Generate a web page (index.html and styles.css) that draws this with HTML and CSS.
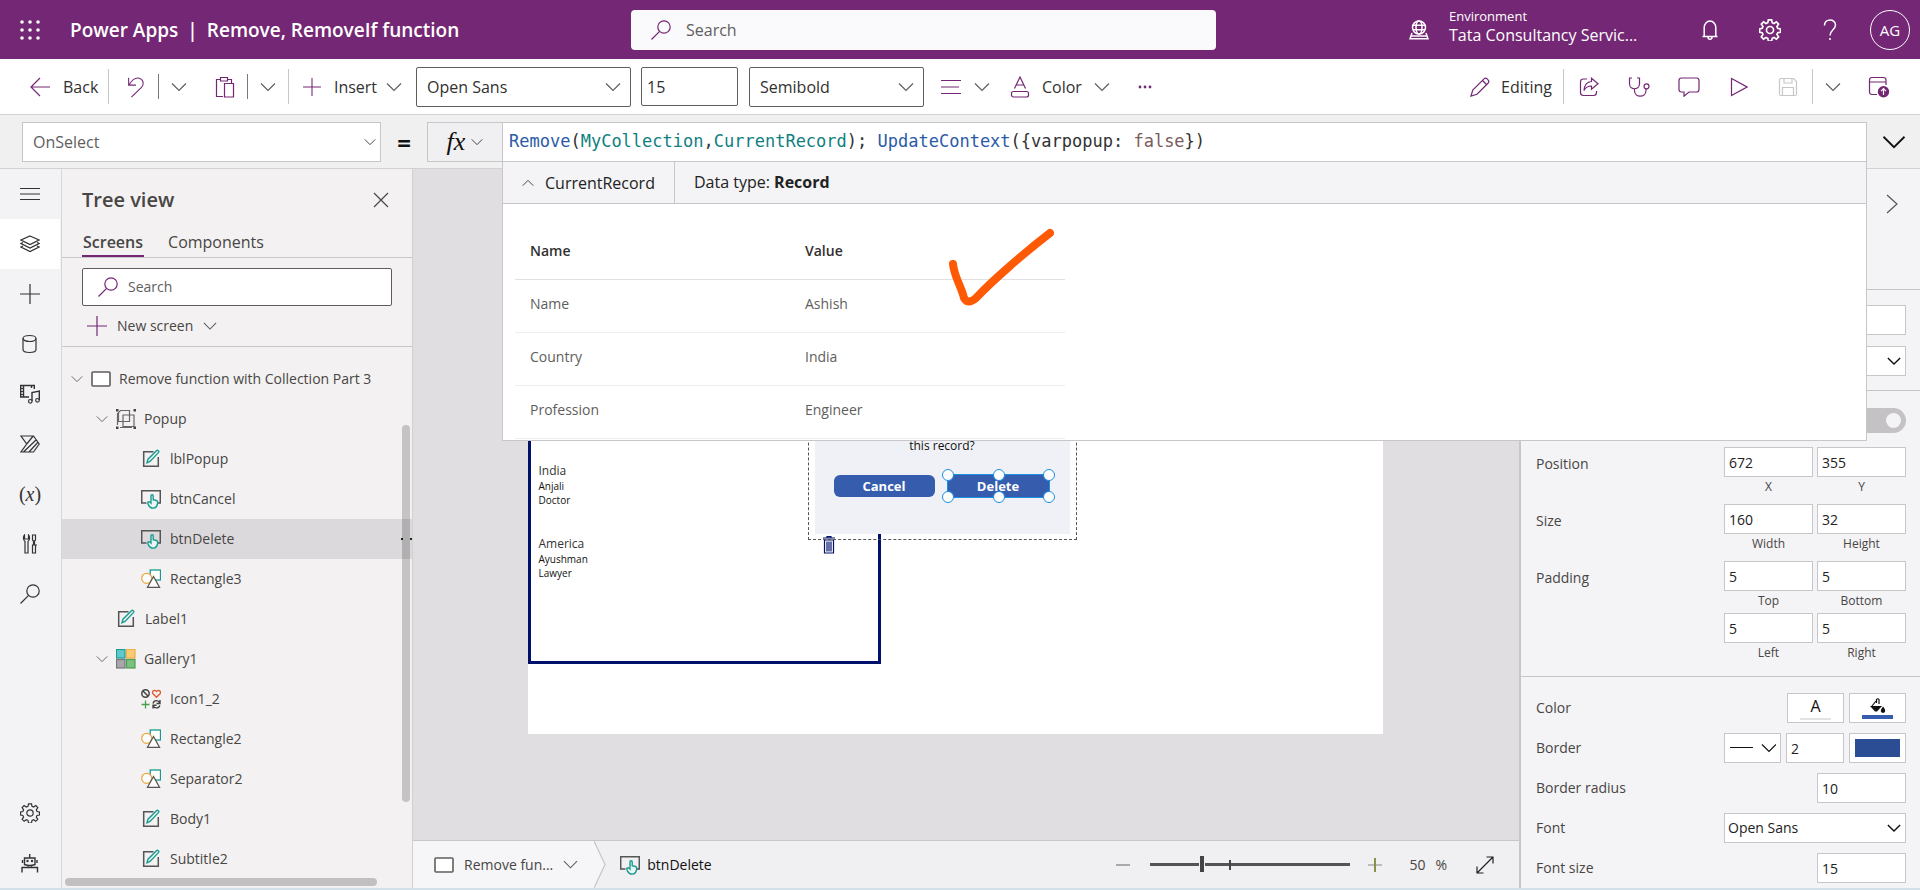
FILE: index.html
```html
<!DOCTYPE html>
<html lang="en">
<head>
<meta charset="utf-8">
<title>Power Apps | Remove, RemoveIf function</title>
<link rel="stylesheet" href="styles.css">
</head>
<body>
<svg class="sprite" aria-hidden="true">
  <symbol id="chev" viewBox="0 0 16 16"><path d="M1 4.500l7 7 7-7"/></symbol>
  <symbol id="plus" viewBox="0 0 20 20"><path d="M10 0v20M0 10h20"/></symbol>
  <symbol id="search" viewBox="0 0 20 20"><circle cx="13" cy="7" r="6.200"/><path d="M8.600 11.400L.5 19.500"/></symbol>
  <symbol id="close" viewBox="0 0 16 16"><path d="M1 1l14 14M15 1L1 15"/></symbol>
  <symbol id="gear" viewBox="0 0 20 20"><circle cx="10" cy="10" r="3.200"/><path d="M8.500 .8h3l.5 2.600 1.600.7 2.200-1.500 2 2-1.500 2.200.7 1.700 2.500.5v3l-2.500.5-.7 1.600 1.500 2.200-2 2-2.200-1.500-1.600.7-.5 2.500h-3L8 17.500l-1.700-.7-2.200 1.500-2-2 1.500-2.200-.7-1.600L.6 12V9l2.300-.5.7-1.700-1.500-2.200 2-2 2.200 1.500L8 3.400z"/></symbol>
  <symbol id="screen" viewBox="0 0 20 16"><rect x="1" y="1" width="18" height="14" rx="1" fill="#fff"/></symbol>
  <symbol id="label" viewBox="0 0 20 20"><path d="M12.500 2.700H2.700v14.600h14.600V8" stroke="#555" stroke-width="1.500"/><path d="M6 13.800l1-3.600L15.700 1.500c.9-.8 2.700.9 1.900 1.900L9 12.500z" stroke="#199b90" stroke-width="1.400"/></symbol>
  <symbol id="button" viewBox="0 0 20 20"><path d="M5.500 14H.7V1.700h18.600V14H17" stroke="#555" stroke-width="1.500"/><path d="M10 13V6.800c0-1.400 2.200-1.400 2.200 0v4l3.200.7c1 .3 1.400.9 1.300 1.900-.2 3.400-1.600 5.700-4.600 5.700-2.400 0-3.600-1-4.400-2.700-.5-1.200-1.500-2.500-.7-3.300.8-.7 1.700-.3 3 1z" fill="#e8f7f5" stroke="#199b90" stroke-width="1.400"/></symbol>
  <symbol id="shapes" viewBox="0 0 20 20"><rect x="9.200" y="1" width="10.300" height="10" fill="#fff" stroke="#199b90" stroke-width="1.300"/><circle cx="5.700" cy="9.300" r="5" fill="#fff" stroke="#eda73c" stroke-width="1.200"/><path d="M12.500 7.500l6 10.800h-12z" fill="#fff" stroke="#555" stroke-width="1.300"/></symbol>
</svg>

<header class="top">
  <button class="icon-btn waffle" aria-label="App launcher"><svg width="20" height="20" viewBox="0 0 20 20"><g class="solid"><circle cx="2" cy="2" r="1.800"/><circle cx="10" cy="2" r="1.800"/><circle cx="18" cy="2" r="1.800"/><circle cx="2" cy="10" r="1.800"/><circle cx="10" cy="10" r="1.800"/><circle cx="18" cy="10" r="1.800"/><circle cx="2" cy="18" r="1.800"/><circle cx="10" cy="18" r="1.800"/><circle cx="18" cy="18" r="1.800"/></g></svg></button>
  <h1 class="brand"><span>Power Apps</span><span>|</span><span>Remove, RemoveIf function</span></h1>
  <label class="top-search"><svg width="20" height="20"><use href="#search"/></svg><input type="text" placeholder="Search" aria-label="Search"></label>
  <div class="top-right">
    <div class="env">
      <svg width="20" height="20" viewBox="0 0 20 20"><circle cx="10" cy="7.500" r="6.500"/><ellipse cx="10" cy="7.500" rx="3" ry="6.500"/><path d="M4 5.300h12M4 9.700h12M3 13L1 18.800h18L17 13M2 16h16"/></svg>
      <p class="env-text"><span class="env-label">Environment</span><span>Tata Consultancy Servic...</span></p>
    </div>
    <button class="icon-btn" aria-label="Notifications"><svg width="20" height="22" viewBox="0 0 20 22"><path d="M2.500 17.500h15M4.200 17.500V8.500a5.800 6.500 0 0 1 11.600 0v9M8 18c0 3 4 3 4 0"/></svg></button>
    <button class="icon-btn" aria-label="Settings"><svg width="22" height="22"><use href="#gear"/></svg></button>
    <button class="icon-btn" aria-label="Help"><svg width="14" height="22" viewBox="0 0 14 22"><path d="M1.500 6.500C1.500-.8 12.500-.5 12.500 6c0 4.500-5.500 5-5.500 10.500M7 19v2"/></svg></button>
    <button class="avatar">AG</button>
  </div>
</header>

<nav class="toolbar">
  <div class="tools">
    <button class="tool back"><svg width="20" height="20" viewBox="0 0 20 20"><path d="M20 10H1M10 1L1 10l9 9"/></svg>Back</button>
    <i class="sep tall"></i>
    <button class="tool undo" aria-label="Undo"><svg width="18" height="22" viewBox="0 0 18 24"><path d="M1 2v8h8M1.500 9.500C5 4 9 1.500 12.500 2.500c5 1.500 5.500 7 2.500 10L4 23"/></svg></button>
    <i class="sep"></i>
    <button class="tool drop" aria-label="Undo options"><svg class="grey" width="16" height="16"><use href="#chev"/></svg></button>
    <button class="tool paste" aria-label="Paste"><svg width="20" height="22" viewBox="0 0 20 22"><path d="M8 20.500H1.500v-17H5M13 3.500h3.500V7M5.500 1.500h7v3.500h-7zM9.500 7.500h9v13.500h-9z"/></svg></button>
    <i class="sep"></i>
    <button class="tool drop" aria-label="Paste options"><svg class="grey" width="16" height="16"><use href="#chev"/></svg></button>
    <i class="sep tall"></i>
    <button class="tool insert"><svg width="18" height="18"><use href="#plus"/></svg>Insert<svg class="grey" width="16" height="16"><use href="#chev"/></svg></button>
    <div class="pick font-pick"><select aria-label="Font"><option>Open Sans</option></select><svg class="grey" width="16" height="16"><use href="#chev"/></svg></div>
    <input class="size-box" type="text" value="15" aria-label="Font size">
    <div class="pick weight-pick"><select aria-label="Font weight"><option>Semibold</option></select><svg class="grey" width="16" height="16"><use href="#chev"/></svg></div>
    <button class="tool align" aria-label="Align"><svg width="20" height="16" viewBox="0 0 20 16"><path d="M0 1.500h20M0 8h18M0 14.500h20"/></svg><svg class="grey" width="16" height="16"><use href="#chev"/></svg></button>
    <button class="tool color"><svg width="20" height="22" viewBox="0 0 20 22"><path d="M4.500 12.500L10 1l5.500 11.500M6.500 9h7"/><rect x="1.500" y="15.500" width="17" height="5.500" rx="2"/></svg>Color<svg class="grey" width="16" height="16"><use href="#chev"/></svg></button>
    <button class="tool more" aria-label="More"><svg width="14" height="4" viewBox="0 0 14 4"><g class="solid"><circle cx="2" cy="2" r="1.400"/><circle cx="7" cy="2" r="1.400"/><circle cx="12" cy="2" r="1.400"/></g></svg></button>
  </div>
  <div class="tools">
    <button class="tool edit"><svg width="20" height="20" viewBox="0 0 20 20"><path d="M1 19l1.800-6L14 1.800c2-2 6.200 2 4.200 4.200L7 17.200zM12.500 3.500l4 4"/></svg>Editing</button>
    <i class="sep tall"></i>
    <button class="tool act" aria-label="Share"><svg width="20" height="20" viewBox="0 0 20 20"><path d="M8 2H4.500Q1.500 2 1.500 5v10.500q0 3 3 3h10q3 0 3-3V14M12.500 1.200l6.500 5.600-6.500 5.500V9C8.500 9 6.500 10.500 5 13.500 5.500 8 8.500 4.700 12.500 4.500z"/></svg></button>
    <button class="tool act" aria-label="App checker"><svg width="22" height="20" viewBox="0 0 22 20"><path d="M4 1H1.500v5.500c0 7 10 7 10 0V1H9M6.500 12v1.500c0 7.500 11.500 7.500 11.500 0V12"/><circle cx="18.500" cy="9.300" r="2.500"/></svg></button>
    <button class="tool act" aria-label="Comments"><svg width="22" height="20" viewBox="0 0 22 20"><path d="M3.500 1h15q2.500 0 2.500 2.500v9q0 2.500-2.500 2.500H11l-5 4.200V15H3.500Q1 15 1 12.500v-9Q1 1 3.500 1z"/></svg></button>
    <button class="tool act" aria-label="Preview"><svg width="18" height="20" viewBox="0 0 18 20"><path d="M1.500 1.500v17L17 10z"/></svg></button>
    <button class="tool act off" aria-label="Save" disabled><svg width="20" height="20" viewBox="0 0 20 20"><path d="M3 1.500h12.500l3 3V17q0 1.500-1.500 1.500H3q-1.500 0-1.500-1.500V3Q1.500 1.500 3 1.500zM6 1.500V6h8V1.500M4.500 18.500V10.500h11v8"/></svg></button>
    <i class="sep tall"></i>
    <button class="tool save-drop" aria-label="Save options"><svg class="grey" width="16" height="16"><use href="#chev"/></svg></button>
    <button class="tool publish" aria-label="Publish"><svg width="22" height="22" viewBox="0 0 22 22"><path d="M9 18.500H4Q1.500 18.500 1.500 16V4Q1.500 1.500 4 1.500h11.500Q18 1.500 18 4v5M1.500 6H18"/><circle class="solid" cx="15.500" cy="15.800" r="5.700"/><path d="M15.500 19v-6M13 15.200l2.500-2.500 2.500 2.500" stroke="#fff"/></svg></button>
  </div>
</nav>

<section class="formula">
  <div class="pick prop-pick"><select aria-label="Property"><option>OnSelect</option></select><svg class="dark" width="12" height="12"><use href="#chev"/></svg></div>
  <span class="equals">=</span>
  <button class="fx"><i>fx</i><svg class="dark" width="12" height="12"><use href="#chev"/></svg></button>
  <div class="formula-field">
    <code class="code"><span class="fn">Remove</span>(<span class="id">MyCollection</span>,<span class="id">CurrentRecord</span>); <span class="fn">UpdateContext</span>({varpopup: <span class="lit">false</span>})</code>
    <div class="result">
      <div class="result-head">
        <button class="result-name"><svg class="dark flip" width="12" height="12"><use href="#chev"/></svg>CurrentRecord</button>
        <p>Data type: <b>Record</b></p>
      </div>
      <div class="result-body">
        <table>
          <thead><tr><th>Name</th><th>Value</th></tr></thead>
          <tbody>
            <tr><td>Name</td><td>Ashish</td></tr>
            <tr><td>Country</td><td>India</td></tr>
            <tr><td>Profession</td><td>Engineer</td></tr>
          </tbody>
        </table>
      </div>
      <svg class="tick" width="110" height="80" viewBox="0 0 110 80"><path d="M9 36C10 48 17 58 20 70q4 7 12 0C48 53 80 25 106 5"/></svg>
    </div>
  </div>
  <button class="expand" aria-label="Expand formula bar"><svg width="24" height="24"><use href="#chev"/></svg></button>
</section>

<main class="work">
  <nav class="rail">
    <button aria-label="Menu"><svg width="20" height="20" viewBox="0 0 20 20"><path d="M0 4.500h20M0 10h20M0 15.500h20"/></svg></button>
    <button class="on" aria-label="Tree view"><svg width="20" height="20" viewBox="0 0 20 20"><path d="M10 2l9 4-9 4.500L1 6zM3 8.500L1 9.500 10 14l9-4.500-2-1M3 12l-2 1 9 4.500 9-4.500-2-1"/></svg></button>
    <button aria-label="Insert"><svg width="20" height="20"><use href="#plus"/></svg></button>
    <button aria-label="Data"><svg width="20" height="20" viewBox="0 0 20 20"><ellipse cx="9.500" cy="4.500" rx="6.500" ry="3"/><path d="M3 4.500v11c0 4 13 4 13 0v-11"/></svg></button>
    <button aria-label="Media"><svg width="20" height="20" viewBox="0 0 20 20"><path d="M9 13H.7V1.500h13.600V5M3.500 1.500v11.500M11.500 1.500V4M12 17V8.500l7.300-1.500v9" stroke-width="1.400"/><path d="M.7 4.500h2.800M.7 7.500h2.800M.7 10.500h2.800"/><circle cx="10.300" cy="17.300" r="1.800"/><circle cx="17.500" cy="16.300" r="1.800"/></svg></button>
    <button aria-label="Power Automate"><svg width="20" height="20" viewBox="0 0 20 20"><path d="M1 2h12.500l5.700 8-5.700 8H1l5.700-8zM6.700 10l6.500-8M3.500 18L16.500 5.500M9 18l8.700-9.500"/></svg></button>
    <button class="var" aria-label="Variables">(<i>x</i>)</button>
    <button aria-label="Advanced tools"><svg width="20" height="20" viewBox="0 0 20 20"><path d="M4.500 1C3 2.500 3 6 5 7.500V19h3V7.500C10 6 10 2.500 8.500 1v4h-4zM12.500 1h3v5l-1 1v4l-1-.0V7l-1-1zM12 11h5M12.500 11v8h3v-8"/></svg></button>
    <button aria-label="Search"><svg width="20" height="20"><use href="#search"/></svg></button>
    <button class="push" aria-label="Settings"><svg width="20" height="20"><use href="#gear"/></svg></button>
    <button aria-label="Virtual agent"><svg width="20" height="20" viewBox="0 0 20 20"><path d="M2 19.500v-5h15.500v5M4.500 5h10.500v6.500q-5.200 2-10.500 0zM9.700 1v4M2.500 7v3M17 7v3M8 12.500v2M11.500 12.500v2" stroke-width="1.400"/><g class="solid"><circle cx="7.500" cy="8" r="1.200"/><circle cx="12" cy="8" r="1.200"/></g></svg></button>
  </nav>

  <aside class="tree">
    <div class="tree-head"><h2>Tree view</h2><button class="icon-btn" aria-label="Close"><svg width="16" height="16"><use href="#close"/></svg></button></div>
    <div class="tabs"><button class="tab on">Screens</button><button class="tab">Components</button></div>
    <div class="tree-tools">
      <label class="tree-search"><svg width="20" height="20"><use href="#search"/></svg><input type="text" placeholder="Search" aria-label="Search tree"></label>
      <button class="new-screen"><svg width="20" height="20"><use href="#plus"/></svg>New screen<svg class="grey" width="14" height="14"><use href="#chev"/></svg></button>
    </div>
    <div class="nodes-wrap">
      <ul class="nodes">
        <li class="l0"><svg class="grey" width="12" height="12"><use href="#chev"/></svg><svg class="frame" width="20" height="16"><use href="#screen"/></svg>Remove function with Collection Part 3</li>
        <li class="l1"><svg class="grey" width="12" height="12"><use href="#chev"/></svg><svg width="20" height="20" viewBox="0 0 20 20"><path d="M4.500 1.500h9v11h-11v-9zM7 6h11v11.500H7zM1.500 4v12M4 18.500h12M18.500 4" stroke="#666"/><path d="M0 0h2.500v2.500H0zM17.500 0H20v2.500h-2.500zM0 17.500h2.500V20H0zM17.500 17.500H20V20h-2.500z" fill="#444" stroke="none"/></svg>Popup</li>
        <li class="l2"><svg width="20" height="20"><use href="#label"/></svg>lblPopup</li>
        <li class="l2"><svg width="20" height="20"><use href="#button"/></svg>btnCancel</li>
        <li class="l2 on"><svg width="20" height="20"><use href="#button"/></svg>btnDelete<span class="dots"><i></i><i></i></span></li>
        <li class="l2"><svg width="20" height="20"><use href="#shapes"/></svg>Rectangle3</li>
        <li class="l1b"><svg width="20" height="20"><use href="#label"/></svg>Label1</li>
        <li class="l1"><svg class="grey" width="12" height="12"><use href="#chev"/></svg><svg width="20" height="20" viewBox="0 0 20 20"><rect x=".5" y=".5" width="8.500" height="8.500" fill="#5fcaca" stroke="#1f9a97"/><rect x="10.500" y=".5" width="8.500" height="8.500" fill="#fbcb74" stroke="#eeb04c"/><rect x=".5" y="10.500" width="8.500" height="8.500" fill="#aaa7ac" stroke="#777"/><rect x="10.500" y="10.500" width="8.500" height="8.500" fill="#7dc17f" stroke="#4e9e55"/></svg>Gallery1</li>
        <li class="l2"><svg width="20" height="20" viewBox="0 0 20 20"><circle cx="4.500" cy="4.500" r="3.700" stroke="#444" stroke-width="1.500"/><path d="M2 2l5 5" stroke="#444" stroke-width="1.500"/><path d="M15.500 8.300L12 4.800c-1.800-2 1.500-5 3.500-2.300 2-2.700 5.300.3 3.500 2.300z" stroke="#e2572f" stroke-width="1.300"/><path d="M4.500 11.500v8M.5 15.500h8" stroke="#47a14b" stroke-width="1.300"/><path d="M19 11v3.500h-3.500M18.800 14c-1.500-3.500-6-3-6.800.5M12 19.500V16.300h3.500M12 16.800c1.500 3 6 2.800 6.800-.5" stroke="#444" stroke-width="1.400"/></svg>Icon1_2</li>
        <li class="l2"><svg width="20" height="20"><use href="#shapes"/></svg>Rectangle2</li>
        <li class="l2"><svg width="20" height="20"><use href="#shapes"/></svg>Separator2</li>
        <li class="l2"><svg width="20" height="20"><use href="#label"/></svg>Body1</li>
        <li class="l2"><svg width="20" height="20"><use href="#label"/></svg>Subtitle2</li>
      </ul>
      <i class="vbar"></i>
    </div>
    <i class="hbar"></i>
  </aside>

  <section class="center">
    <div class="canvas">
      <div class="stage">
        <div class="gallery">
          <div class="item item-a"><p>India</p><p>Anjali</p><p>Doctor</p></div>
          <div class="item item-b"><p>America</p><p>Ayushman</p><p>Lawyer</p></div>
          <svg class="trash" width="12" height="18" viewBox="0 0 12 18"><path d="M0 2h12M4 2V.7h4V2M1.500 4h9v13h-9zM4 5.500v10M6 5.500v10M8 5.500v10"/></svg>
        </div>
        <div class="popup-group">
          <div class="popup">
            <p>this record?</p>
            <div class="popup-btns">
              <button class="pbtn">Cancel</button>
              <button class="pbtn sel">Delete<i class="h tl"></i><i class="h tc"></i><i class="h tr"></i><i class="h bl"></i><i class="h bc"></i><i class="h br"></i></button>
            </div>
          </div>
        </div>
      </div>
    </div>
    <footer class="status">
      <button class="crumb"><svg class="frame" width="20" height="16"><use href="#screen"/></svg>Remove fun...<svg class="grey" width="15" height="15"><use href="#chev"/></svg></button>
      <svg class="crumb-arrow" width="12" height="47" viewBox="0 0 12 47"><path d="M0 0l11 23.500L0 47"/></svg>
      <button class="crumb last"><svg width="20" height="20"><use href="#button"/></svg>btnDelete</button>
      <div class="zoom">
        <button aria-label="Zoom out"><svg width="14" height="14" viewBox="0 0 14 14"><path d="M0 7h14" stroke="#aaa" stroke-width="2"/></svg></button>
        <div class="slider"><input type="range" min="0" max="100" value="25" aria-label="Zoom"><i></i></div>
        <button aria-label="Zoom in"><svg width="14" height="14" viewBox="0 0 14 14"><path d="M0 7h14" stroke="#999"/><path d="M7 0v14" stroke="#8a8f4a" stroke-width="2"/></svg></button>
        <span class="pct"><span>50</span><span>%</span></span>
        <button class="fit" aria-label="Fit to window"><svg width="18" height="18" viewBox="0 0 18 18"><path d="M1 17L17 1M10.500 1H17v6.500M1 10.500V17h6.500"/></svg></button>
      </div>
    </footer>
  </section>

  <aside class="props">
    <div class="props-top"><button class="icon-btn" aria-label="Collapse panel"><svg width="12" height="20" viewBox="0 0 12 20"><path d="M1 1l10 9-10 9" stroke="#555"/></svg></button></div>
    <div class="group g-a">
      <input type="text" aria-label="Text">
      <div class="pick"><select aria-label="Display mode"><option></option></select><svg class="ink" width="14" height="14"><use href="#chev"/></svg></div>
    </div>
    <div class="group g-b">
      <div class="row"><input class="switch" type="checkbox" checked aria-label="Visible"></div>
      <div class="row"><span>Position</span>
        <label class="cell"><input type="text" value="672">X</label><label class="cell"><input type="text" value="355">Y</label></div>
      <div class="row"><span>Size</span>
        <label class="cell"><input type="text" value="160">Width</label><label class="cell"><input type="text" value="32">Height</label></div>
      <div class="row pad"><span>Padding</span>
        <label class="cell"><input type="text" value="5">Top</label><label class="cell"><input type="text" value="5">Bottom</label></div>
      <div class="row"><span></span>
        <label class="cell"><input type="text" value="5">Left</label><label class="cell"><input type="text" value="5">Right</label></div>
    </div>
    <div class="group g-c">
      <div class="line"><span>Color</span><button class="swatch" aria-label="Text color"><b>A</b><i></i></button><button class="swatch" aria-label="Fill color"><svg width="16" height="15" viewBox="0 0 16 15"><path d="M6.500 5V1.500Q8 0 9 1.500V6M6 3L2 8" stroke="#111"/><path d="M0 8h12L7 13.500H5z" fill="#111" stroke="none"/><path d="M13 9.500q2.500 3 1 4.500-1.500.8-2.500-.5-.5-1.500 1.500-4z" fill="#111"/></svg><i class="blue"></i></button></div>
      <div class="line"><label for="bw">Border</label><button class="swatch style" aria-label="Border style"><svg width="46" height="14" viewBox="0 0 46 14"><path d="M0 6.500h23M32 3.500l7 7 7-7"/></svg></button><input id="bw" class="mid" type="text" value="2"><button class="swatch" aria-label="Border color"><em></em></button></div>
      <div class="line"><label for="br">Border radius</label><input id="br" type="text" value="10"></div>
      <div class="line"><label for="ff">Font</label><div class="pick"><select id="ff"><option>Open Sans</option></select><svg class="ink" width="14" height="14"><use href="#chev"/></svg></div></div>
      <div class="line"><label for="fs">Font size</label><input id="fs" type="text" value="15"></div>
    </div>
  </aside>
</main>
<div class="strip"></div>
</body>
</html>
```

FILE: styles.css
```css
* { box-sizing: border-box; }
body {
  margin: 0; height: 100vh; display: flex; flex-direction: column; overflow: hidden;
  font: 14px/20px "Open Sans", "Noto Sans", sans-serif; color: #484644; background: #f3f2f4;
}
.sprite { position: absolute; width: 0; height: 0; }
h1, h2, p, ul { margin: 0; padding: 0; }
button, input, select { font: inherit; color: inherit; }
button { background: none; border: 0; padding: 0; display: flex; align-items: center; justify-content: center; }
input, select { border: 1px solid #c8c6c9; background: #fff; min-width: 0; border-radius: 0; }
input::placeholder { color: #605e5c; opacity: 1; }
svg { fill: none; stroke: currentColor; stroke-width: 1.2; flex: none; display: block; }
.solid { fill: currentColor; stroke: none; }
.grey { color: #605e5c; }
.dark { color: #333; }
.ink { color: #111; stroke-width: 1.6; }

.top { flex: 0 0 59px; background: #742774; color: #fff; display: flex; align-items: center; padding: 0 10px 0 20px; }
.waffle { width: 20px; }
.brand { flex: 0 0 561px; margin-left: 30px; display: flex; gap: 9px; font-size: 19px; font-weight: 600; white-space: nowrap; }
.top-search { flex: 0 1 585px; height: 40px; display: flex; align-items: center; gap: 15px; padding: 0 20px; background: #faf9fb; border-radius: 4px; color: #742774; }
.top-search input { flex: 1; border: 0; background: none; padding: 0; font-size: 16px; }
.top-right { flex: 1; display: flex; align-items: center; justify-content: flex-end; gap: 20px; }
.top-right .icon-btn { width: 40px; height: 40px; }
.top-right svg { stroke-width: 1.5; }
.env { display: flex; align-items: center; gap: 20px; margin-right: 29px; }
.env-text { display: flex; flex-direction: column; width: 192px; padding-bottom: 8px; font-size: 16px; white-space: nowrap; }
.env-label { font-size: 13px; line-height: 18px; }
.avatar { width: 40px; height: 40px; border: 1px solid #fff; border-radius: 50%; font-size: 15px; }

.toolbar { flex: 0 0 56px; background: #fff; border-bottom: 1px solid #d2d0d3; display: flex; justify-content: space-between; padding: 0 30px; font-size: 16px; }
.tools { display: flex; align-items: center; color: #742774; }
.tool { height: 40px; gap: 10px; color: #323130; }
.tool svg { color: #742774; }
.tool svg.grey { color: #605e5c; }
.sep { width: 1px; height: 25px; background: #797779; }
.sep.tall { height: 35px; background: #c8c6c9; }
.back { width: 78px; gap: 13px; justify-content: flex-start; }
.undo { width: 49px; padding-left: 5px; }
.drop { width: 40px; }
.undo + .sep + .drop { margin-right: 3px; }
.paste { width: 45px; }
.insert { width: 127px; gap: 13px; }
.pick { display: grid; align-items: center; }
.pick > * { grid-area: 1 / 1; }
.pick select { appearance: none; width: 100%; height: 100%; padding: 0 10px; }
.pick svg { justify-self: end; margin-right: 10px; pointer-events: none; }
.tools .pick select, .size-box { border-color: #605e5c; border-radius: 2px; color: #323130; }
.font-pick { width: 215px; height: 40px; }
.size-box { width: 97px; height: 39px; margin: 0 11px 0 10px; padding: 0 5px; }
.weight-pick { width: 175px; height: 40px; }
.align { margin-left: 17px; gap: 13px; }
.color { margin-left: 20px; gap: 12px; }
.insert svg.grey { margin-left: -4px; }
.more { margin-left: 28px; }
.edit { margin-right: 11px; gap: 11px; }
.act { width: 50px; }
.act.off { width: 48px; }
.off svg { color: #c8c6c9; }
.save-drop { width: 40px; }
.publish { margin-left: 15px; }

.formula { flex: 0 0 54px; position: relative; z-index: 5; display: flex; align-items: flex-start; padding: 7px 0 0 22px; background: #f0f0f1; border-bottom: 1px solid #d2d0d3; }
.prop-pick { width: 359px; height: 40px; font-size: 16px; }
.prop-pick select { color: #605e5c; }
.prop-pick svg { margin-right: 5px; }
.equals { width: 46px; text-align: center; font-size: 24px; line-height: 42px; font-weight: 700; color: #111; }
.fx { width: 75px; height: 40px; gap: 6px; background: #f0eff1; border: 1px solid #c8c6c9; border-right: 0; }
.fx i { font: italic 26px/30px "Liberation Serif", serif; color: #111; }
.formula-field { flex: 1; position: relative; height: 40px; background: #fff; border: 1px solid #c8c6c9; }
.code { display: block; padding-left: 6px; font: 17px/36px "DejaVu Sans Mono", monospace; color: #333; white-space: pre; }
.fn { color: #2b5ba8; }
.id { color: #0f7f7f; }
.lit { color: #7b5c5c; }
.expand { width: 53px; height: 40px; color: #111; }
.result { position: absolute; top: calc(100% + 1px); left: -1px; right: -1px; background: #fff; border: 1px solid #c8c6c9; border-top: 0; }
.result-head { display: flex; height: 42px; align-items: stretch; background: #f4f3f5; border-bottom: 1px solid #c8c6c9; font-size: 16px; color: #222; }
.result-name { gap: 11px; padding: 0 19px; border-right: 1px solid #c8c6c9; }
.result-head p { padding: 0 19px; line-height: 41px; }
.flip { transform: rotate(180deg); }
.result-body { padding: 20px 12px 1px; }
table { width: 550px; border-collapse: collapse; table-layout: fixed; color: #605e5c; }
th, td { height: 53px; padding: 0 15px 3px; text-align: left; border-bottom: 1px solid #eeecef; }
th { height: 55px; padding-bottom: 0; font-weight: 600; color: #323130; border-color: #e1dfe3; }
.tick { position: absolute; left: 441px; top: 66px; color: #fe5a05; stroke-width: 8; stroke-linecap: round; }

.work { flex: 1; display: flex; min-height: 0; }
.rail { flex: 0 0 62px; display: flex; flex-direction: column; border-right: 1px solid #d8d6d9; color: #333; }
.rail button { height: 50px; width: 60px; flex: 0 1 50px; }
.rail .on { background: #fff; }
.rail .var { font: 20px/24px "Liberation Serif", serif; }
.rail .push { margin-top: auto; }

.tree { flex: 0 0 351px; display: flex; flex-direction: column; border-right: 1px solid #d2d0d3; background: #f3f1f2; }
.tree-head { height: 60px; padding: 2px 23px 0 20px; display: flex; align-items: center; justify-content: space-between; }
.tree-head h2 { font-size: 20px; font-weight: 600; }
.tabs { display: flex; gap: 24px; height: 29px; padding-left: 20px; border-bottom: 1px solid #c8c6c9; font-size: 16px; }
.tab { height: 28px; border-bottom: 2px solid transparent; }
.tab.on { font-weight: 600; border-color: #742774; padding: 0 1px; }
.tree-tools { padding: 10px 20px 0; height: 89px; border-bottom: 1px solid #c8c6c9; }
.tree-search { height: 38px; display: flex; align-items: center; gap: 10px; padding: 0 15px; border: 1px solid #605e5c; border-radius: 2px; background: #fff; color: #742774; }
.tree-search input { border: 0; padding: 0; flex: 1; }
.new-screen { height: 40px; padding-left: 5px; gap: 10px; }
.new-screen svg:first-child { color: #742774; }
.nodes-wrap { flex: 1; min-height: 0; display: grid; padding-top: 12px; position: relative; }
.nodes { list-style: none; min-width: 0; }
.nodes li { height: 40px; display: flex; align-items: center; gap: 9px; white-space: nowrap; }
.nodes .l0 { padding-left: 9px; gap: 8px; }
.nodes .l1 { padding-left: 34px; gap: 8px; }
.nodes .l1b { padding-left: 54px; }
.nodes .l2 { padding-left: 79px; }
.nodes .on { background: #dbd9db; }
.frame { color: #605e5c; stroke-width: 1.6; }
.dots { margin-left: auto; display: flex; gap: 7px; }
.dots i { width: 2px; height: 2px; background: #222; }
.vbar { position: absolute; right: 2px; top: 78px; bottom: 75px; width: 8px; border-radius: 4px; background: #00000030; }
.hbar { flex: 0 0 8px; width: 312px; margin: 1px 0 2px 3px; border-radius: 4px; background: #c2c0c1; }

.center { flex: 1; min-width: 0; display: flex; flex-direction: column; }
.canvas { flex: 1; min-height: 0; display: flex; align-items: center; justify-content: center; padding: 0 22px 22px 0; background: #e0dee1; }
.stage { position: relative; width: 855px; height: 481px; background: #fff; }
.gallery { position: absolute; left: 0; top: 0; width: 353px; height: 411px; border: 3px solid #00116b; }
.item { position: absolute; left: 8px; font-size: 10px; line-height: 14px; color: #111; }
.item p:first-child { font-size: 12px; line-height: 16px; color: #333; }
.item-a { top: 207px; }
.item-b { top: 280px; }
.trash { position: absolute; left: 292px; top: 280px; color: #00116b; }
.popup-group { position: absolute; left: 280px; top: 120px; width: 269px; height: 167px; border: 1px dashed #555; }
.popup { height: 160px; margin: 0 6px; background: #eff1f6; padding-top: 64px; text-align: center; font-size: 12px; line-height: 16px; color: #111; }
.popup-btns { display: flex; justify-content: center; gap: 13px; margin: 21px 2px 0 0; }
.pbtn { position: relative; width: 101px; height: 22px; border-radius: 6px; background: #365cae; color: #fff; font-weight: 700; font-size: 13px; }
.sel { border-radius: 0; outline: 1px solid #1b8fe0; }
.h { position: absolute; width: 12px; height: 12px; border: 1px solid #1b8fe0; border-radius: 50%; background: #fff; }
.tl, .tc, .tr { top: -6px; }
.bl, .bc, .br { bottom: -6px; }
.tl, .bl { left: -6px; }
.tc, .bc { left: 45px; }
.tr, .br { right: -6px; }

.status { flex: 0 0 48px; display: flex; align-items: center; background: #f0eff1; border-top: 1px solid #c8c6c9; padding-right: 25px; white-space: nowrap; }
.crumb { height: 47px; padding: 0 16px 0 21px; gap: 10px; background: #f6f5f8; }
.crumb.last { background: none; padding: 0 0 0 14px; gap: 7px; color: #111; }
.crumb-arrow { color: #c8c6c9; }
.crumb-arrow path { fill: #f6f5f8; }
.zoom { margin-left: auto; display: flex; align-items: center; gap: 18px; }
.slider { display: grid; align-items: center; width: 200px; margin-left: 2px; }
.slider > * { grid-area: 1 / 1; }
.slider i { width: 2px; height: 10px; margin-left: 79px; background: #444; pointer-events: none; }
.slider input { appearance: none; background: none; border: 0; margin: 0; width: 100%; height: 20px; }
.slider input::-webkit-slider-runnable-track { height: 3px; background: #555356; }
.slider input::-webkit-slider-thumb { appearance: none; width: 6px; height: 16px; margin-top: -7px; background: #444; border: solid #f0eff1; border-width: 0 1px; }
.pct { display: flex; gap: 10px; padding: 0 11px 0 9px; }
.fit { color: #222; }

.props { flex: 0 0 401px; border-left: 2px solid #c8c6c9; background: #f4f3f6; overflow: hidden; }
.props-top { height: 120px; display: flex; align-items: flex-start; justify-content: flex-end; padding: 25px 22px; }
.group { border-top: 1px solid #c8c6c9; padding: 0 14px 0 15px; }
.props input[type="text"] { width: 89px; height: 30px; padding: 0 4px; color: #222; }
.props select { padding: 0 3px; color: #222; }
.props .pick { width: 182px; height: 30px; }
.props .pick svg { margin-right: 5px; }
.g-a { height: 101px; padding-top: 15px; display: flex; flex-direction: column; align-items: flex-end; gap: 11px; }
.g-a input[type="text"] { width: 182px; }
.g-b { height: 286px; padding-top: 17px; }
.row { display: flex; justify-content: flex-end; gap: 4px; height: 57px; }
.row:first-child { height: 39px; }
.row.pad { height: 52px; }
.row > span { flex: 1; line-height: 33px; }
.cell { display: flex; flex-direction: column; align-items: center; font-size: 12px; }
.cell input { font-size: 14px; }
.switch { appearance: none; width: 50px; height: 25px; margin: 0; border: 0; border-radius: 13px; background: #c4c2c4; display: grid; align-items: center; justify-content: end; padding-right: 5px; }
.switch::before { content: ""; width: 15px; height: 15px; border-radius: 50%; background: #f4f3f6; }
.g-c { padding-top: 11px; }
.line { display: flex; align-items: center; gap: 5px; height: 40px; }
.line > :first-child { flex: 1; }
.props .line input.mid { width: 58px; }
.swatch { width: 57px; height: 30px; border: 1px solid #c8c6c9; background: #fff; flex-direction: column; color: #111; }
.swatch b { font-weight: 400; font-size: 16px; line-height: 19px; }
.swatch i { width: 31px; height: 2px; background: #e4e2e5; margin-top: 2px; }
.swatch .blue { height: 4px; background: #365cae; }
.swatch em { width: 45px; height: 18px; background: #2a4d94; }
.strip { flex: 0 0 2px; background: #d2e0ea; }
```
